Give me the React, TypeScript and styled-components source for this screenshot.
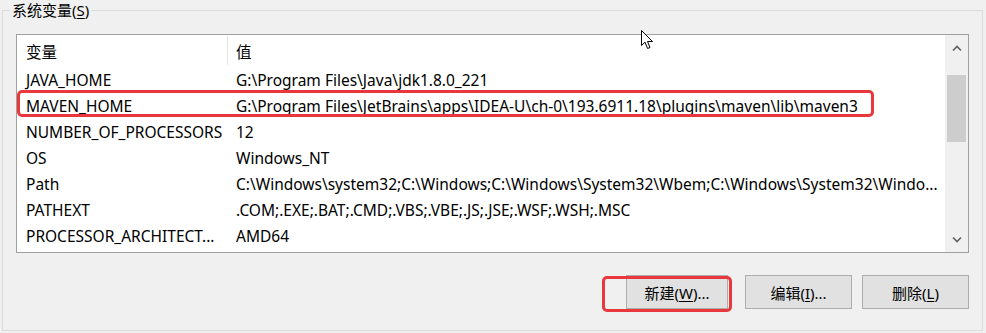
import React from "react";
import styled, { createGlobalStyle } from "styled-components";

const GlobalStyle = createGlobalStyle`
  html, body {
    margin: 0;
    padding: 0;
    background: #f0f0f0;
    font-family: "Noto Sans", "Noto Sans CJK SC", sans-serif;
    color: #000;
  }
  * { box-sizing: border-box; }
`;

const Page = styled.div`
  position: relative;
  width: 986px;
  height: 333px;
  overflow: hidden;
  padding: 0 0 0 2px;
`;

const GroupBox = styled.fieldset`
  margin: 0;
  width: 981px;
  height: 331px;
  border: 1px solid #dcdcdc;
  padding: 0 13px 20px 13px;
  display: flex;
  flex-direction: column;
`;

const Legend = styled.legend`
  margin-left: -6px;
  padding: 0 2px;
  font-size: 15px;
  line-height: 20px;
  height: 20px;
`;

const Key = styled.span`
  text-decoration: underline;
  text-underline-offset: 2px;
`;

const ListBox = styled.div`
  margin-top: 14px;
  height: 219px;
  border: 1px solid #a0a0a0;
  background: #fff;
  display: grid;
  grid-template-columns: 1fr 23px;
`;

const Table = styled.div`
  display: flex;
  flex-direction: column;
`;

const HeaderRow = styled.div`
  display: grid;
  grid-template-columns: 211px 1fr;
  height: 31px;
  align-items: center;
  font-size: 15.5px;
`;

const HeaderCell = styled.div<{ $divider?: boolean }>`
  height: 29px;
  display: flex;
  align-items: center;
  padding-top: 1px;
  padding-left: ${(p) => (p.$divider ? "9px" : "8px")};
  border-right: ${(p) => (p.$divider ? "1px solid #e5e5e5" : "none")};
`;

const Row = styled.div`
  display: grid;
  grid-template-columns: 211px 1fr;
  height: 26px;
  padding-top: 1px;
  align-items: center;
  font-size: 15.5px;
  white-space: nowrap;
`;

const NameCell = styled.div`
  padding-left: 9px;
  overflow: hidden;
`;

const ValueCell = styled.div`
  padding-left: 8px;
  overflow: hidden;
`;

const ScrollBar = styled.div`
  background: #f0f0f0;
  display: flex;
  flex-direction: column;
  align-items: center;
`;

const ArrowBox = styled.div`
  height: 26px;
  width: 100%;
  display: flex;
  align-items: center;
  justify-content: center;
`;

const Track = styled.div`
  flex: 1;
  width: 100%;
  padding: 14px 2px 0 2px;
`;

const Thumb = styled.div`
  height: 67px;
  background: #cdcdcd;
`;

const ButtonBar = styled.div`
  margin-top: 22px;
  display: flex;
  justify-content: flex-end;
  gap: 10px;
`;

const Button = styled.button<{ $w: number; $mr?: number }>`
  width: ${(p) => p.$w}px;
  height: 34px;
  margin-right: ${(p) => p.$mr ?? 0}px;
  border: 1px solid #adadad;
  background: #e1e1e1;
  font-family: "Noto Sans", "Noto Sans CJK SC", sans-serif;
  font-size: 15px;
  color: #000;
  padding: 0;
`;

const RedMark = styled.div<{ $x: number; $y: number; $w: number; $h: number }>`
  position: absolute;
  left: ${(p) => p.$x}px;
  top: ${(p) => p.$y}px;
  width: ${(p) => p.$w}px;
  height: ${(p) => p.$h}px;
  border: 3px solid #e8383d;
  border-radius: 5px;
  pointer-events: none;
`;

const Cursor = styled.svg`
  position: absolute;
  left: 641px;
  top: 30px;
`;

const rows: [string, string][] = [
  ["JAVA_HOME", "G:\\Program Files\\Java\\jdk1.8.0_221"],
  ["MAVEN_HOME", "G:\\Program Files\\JetBrains\\apps\\IDEA-U\\ch-0\\193.6911.18\\plugins\\maven\\lib\\maven3"],
  ["NUMBER_OF_PROCESSORS", "12"],
  ["OS", "Windows_NT"],
  ["Path", "C:\\Windows\\system32;C:\\Windows;C:\\Windows\\System32\\Wbem;C:\\Windows\\System32\\Windo..."],
  ["PATHEXT", ".COM;.EXE;.BAT;.CMD;.VBS;.VBE;.JS;.JSE;.WSF;.WSH;.MSC"],
  ["PROCESSOR_ARCHITECT...", "AMD64"],
];

const Chevron = ({ up }: { up?: boolean }) => (
  <svg width="10" height="7" viewBox="0 0 10 7">
    <path
      d={up ? "M1 5.5 L5 1.5 L9 5.5" : "M1 1.5 L5 5.5 L9 1.5"}
      fill="none"
      stroke="#606060"
      strokeWidth="1.6"
    />
  </svg>
);

export default function App() {
  return (
    <Page>
      <GlobalStyle />
      <GroupBox>
        <Legend>
          系统变量(<Key>S</Key>)
        </Legend>
        <ListBox>
          <Table>
            <HeaderRow>
              <HeaderCell $divider>变量</HeaderCell>
              <HeaderCell>值</HeaderCell>
            </HeaderRow>
            {rows.map(([name, value]) => (
              <Row key={name}>
                <NameCell>{name}</NameCell>
                <ValueCell>{value}</ValueCell>
              </Row>
            ))}
          </Table>
          <ScrollBar>
            <ArrowBox>
              <Chevron up />
            </ArrowBox>
            <Track>
              <Thumb />
            </Track>
            <ArrowBox>
              <Chevron />
            </ArrowBox>
          </ScrollBar>
        </ListBox>
        <ButtonBar>
          <Button $w={102} $mr={7}>
            新建(<Key>W</Key>)...
          </Button>
          <Button $w={107}>
            编辑(<Key>I</Key>)...
          </Button>
          <Button $w={107}>
            删除(<Key>L</Key>)
          </Button>
        </ButtonBar>
      </GroupBox>
      <RedMark $x={17} $y={90} $w={857} $h={27} />
      <RedMark $x={602} $y={276} $w={130} $h={36} />
      <Cursor width="13" height="20" viewBox="0 0 13 20">
        <path
          d="M0.5 0.5 L0.5 15.5 L4 12.2 L6.6 18.5 L9 17.5 L6.5 11.5 L11.5 11.5 Z"
          fill="#fff"
          stroke="#000"
          strokeWidth="1"
        />
      </Cursor>
    </Page>
  );
}
